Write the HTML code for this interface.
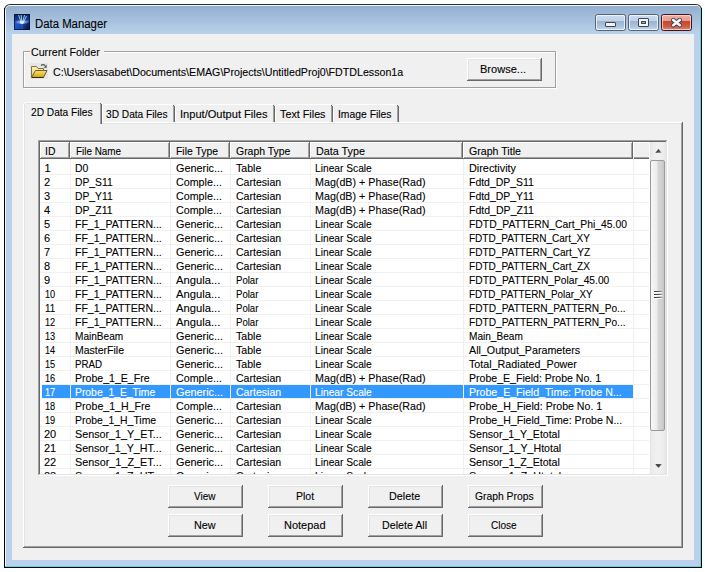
<!DOCTYPE html>
<html><head><meta charset="utf-8"><style>
html,body{margin:0;padding:0}
body{width:705px;height:572px;background:#fff;position:relative;overflow:hidden;font-family:"Liberation Sans",sans-serif;font-size:11px;color:#000}
div{position:absolute;box-sizing:border-box}
.t{white-space:nowrap;line-height:13px;height:13px;transform-origin:0 0;-webkit-text-stroke:0.1px currentColor}
</style></head><body>

<div style="left:4px;top:4px;width:698px;height:564px;background:#2e2e2e;border-radius:6px 6px 0 0"></div>
<div style="left:5px;top:5px;width:696px;height:562px;background:#f4f8fc;border-radius:5px 5px 0 0"></div>
<div style="left:6px;top:6px;width:694px;height:560px;background:#b9d1ea;border-radius:4px 4px 0 0"></div>
<div style="left:700px;top:8px;width:1px;height:559px;background:#4fd8f0"></div>
<div style="left:5px;top:566px;width:696px;height:1px;background:#4fd8f0"></div>
<div style="left:4px;top:567px;width:698px;height:1px;background:#000"></div>
<div style="left:701px;top:8px;width:1px;height:560px;background:#000"></div>
<div style="left:4px;top:8px;width:1px;height:560px;background:#000"></div>
<div style="left:6px;top:6px;width:694px;height:28px;background:linear-gradient(#94b0d0,#b9d1ea);border-radius:4px 4px 0 0"></div>
<div style="left:12px;top:34px;width:682px;height:526px;background:#f0f0f0"></div>
<svg style="position:absolute;left:14px;top:14px" width="16" height="16" viewBox="0 0 16 16">
<defs>
<linearGradient id="it" x1="0" y1="0" x2="0" y2="1"><stop offset="0" stop-color="#0a2460"/><stop offset="1" stop-color="#1a4aa8"/></linearGradient>
<linearGradient id="ibm" x1="0" y1="0" x2="1" y2="0.3"><stop offset="0" stop-color="#1f5ed8"/><stop offset="0.5" stop-color="#1a4cb8"/><stop offset="1" stop-color="#081a48"/></linearGradient>
<radialGradient id="ig" cx="0.5" cy="0.5" r="0.5"><stop offset="0" stop-color="#ffffff" stop-opacity="1"/><stop offset="0.6" stop-color="#c0e0ff" stop-opacity="0.6"/><stop offset="1" stop-color="#9fd0ff" stop-opacity="0"/></radialGradient>
</defs>
<rect x="0" y="0" width="16" height="8" fill="url(#it)"/>
<rect x="0" y="8" width="16" height="8" fill="url(#ibm)"/>
<path d="M8 9 V16" stroke="#5a8ae0" stroke-width="0.8" opacity="0.5"/>
<path d="M4.5 1 L7.5 9 M7 0.5 L8 9 M10.5 1 L8.5 9 M12.5 2 L9 9" stroke="#a8dcff" stroke-width="1" opacity="0.9"/>
<ellipse cx="8" cy="8" rx="7.5" ry="2.4" fill="url(#ig)" opacity="0.75"/>
<ellipse cx="8" cy="8.5" rx="2" ry="1.5" fill="#f0f8ff" opacity="0.8"/>
<rect x="0.5" y="0.5" width="15" height="15" fill="none" stroke="#081030" stroke-width="1" opacity="0.75"/>
</svg>
<div class="t" style="left:35.00px;top:17px;line-height:15px;height:15px;font-size:12px;transform:scaleX(0.9468);color:#000;">Data Manager</div>
<div style="left:595px;top:14px;width:31px;height:17px;border:1px solid #56657b;border-radius:2.5px;background:linear-gradient(#cddcee 0px,#bfd2ea 6.5px,#9ab5d3 6.5px,#a9c2dd 11px,#c6d9ee 15px)"></div><div style="left:596px;top:15px;width:29px;height:15px;border:1px solid rgba(240,246,252,0.85);border-radius:2px"></div>
<div style="left:628px;top:14px;width:31px;height:17px;border:1px solid #56657b;border-radius:2.5px;background:linear-gradient(#cddcee 0px,#bfd2ea 6.5px,#9ab5d3 6.5px,#a9c2dd 11px,#c6d9ee 15px)"></div><div style="left:629px;top:15px;width:29px;height:15px;border:1px solid rgba(240,246,252,0.85);border-radius:2px"></div>
<div style="left:661px;top:14px;width:31px;height:17px;border:1px solid #4b0f17;border-radius:2.5px;background:linear-gradient(#eab0a4 0px,#e39a8a 6.5px,#c6482f 6.5px,#c95a42 11px,#d98a74 15px)"></div><div style="left:662px;top:15px;width:29px;height:15px;border:1px solid rgba(255,220,210,0.8);border-radius:2px"></div>
<div style="left:605px;top:22px;width:11px;height:5px;background:#f4f4f4;border:1px solid #3b4452;border-radius:1px"></div>
<div style="left:638px;top:18px;width:11px;height:9px;background:#f4f4f4;border:1px solid #3b4452;border-radius:1px"></div>
<div style="left:641px;top:21px;width:5px;height:3px;background:#8fb0d4;border:1px solid #3b4452"></div>
<svg style="position:absolute;left:669px;top:16px" width="15" height="13" viewBox="0 0 15 13">
<path d="M4.2 4 L10.8 9.2 M10.8 4 L4.2 9.2" stroke="#3b4452" stroke-width="4.4" stroke-linecap="round"/>
<path d="M4.2 4 L10.8 9.2 M10.8 4 L4.2 9.2" stroke="#f6f6f6" stroke-width="2.6" stroke-linecap="round"/>
</svg>
<div style="left:24px;top:52px;width:533px;height:37px;border:1px solid #fff"></div>
<div style="left:23px;top:51px;width:533px;height:37px;border:1px solid #a0a0a0"></div>
<div style="left:30px;top:45px;width:74px;height:12px;background:#f0f0f0"></div>
<div class="t" style="left:31.00px;top:46px;transform:scaleX(0.9684);">Current Folder</div>
<svg style="position:absolute;left:30px;top:63px" width="18" height="16" viewBox="0 0 18 16">
<defs>
<linearGradient id="fb" x1="0" y1="0" x2="0" y2="1"><stop offset="0" stop-color="#fbf0b0"/><stop offset="1" stop-color="#e8d070"/></linearGradient>
<linearGradient id="ff" x1="0" y1="0" x2="0" y2="1"><stop offset="0" stop-color="#f6e070"/><stop offset="0.6" stop-color="#e8c030"/><stop offset="1" stop-color="#c89a10"/></linearGradient>
</defs>
<rect x="0" y="0" width="18" height="16" fill="#e5e5e5"/>
<path d="M1.5 14.5 V3.5 H6.5 L8 5.5 H13.5 V7.5" fill="url(#fb)" stroke="#7d7048" stroke-width="1"/>
<path d="M1.5 14.5 L5.5 7.5 H17 L13.5 14.5 Z" fill="url(#ff)" stroke="#6e6030" stroke-width="1"/>
<path d="M2 14.5 H13.5" stroke="#302810" stroke-width="1"/>
<path d="M11 2.5 Q13 0.6 15.2 2.6" fill="none" stroke="#505050" stroke-width="1.1"/>
<path d="M13.8 4.8 L16.8 4.8 L16.4 1.6 Z" fill="#505050"/>
</svg>
<div class="t" style="left:53.00px;top:66px;transform:scaleX(0.9675);">C:\Users\asabet\Documents\EMAG\Projects\UntitledProj0\FDTDLesson1a</div>
<div style="left:467px;top:58px;width:75px;height:23px;background:#696969"></div><div style="left:467px;top:58px;width:74px;height:22px;background:#fff"></div><div style="left:468px;top:59px;width:73px;height:21px;background:#a0a0a0"></div><div style="left:468px;top:59px;width:72px;height:20px;background:#e3e3e3"></div><div style="left:469px;top:60px;width:71px;height:19px;background:#f0f0f0"></div><div class="t" style="left:480.00px;top:63px;transform:scaleX(1.0046);">Browse...</div>
<div style="left:23px;top:122px;width:660px;height:426px;background:#696969"></div>
<div style="left:23px;top:122px;width:659px;height:425px;background:#fff"></div>
<div style="left:24px;top:123px;width:658px;height:424px;background:#a0a0a0"></div>
<div style="left:24px;top:123px;width:657px;height:423px;background:#e3e3e3"></div>
<div style="left:25px;top:124px;width:656px;height:422px;background:#f0f0f0"></div>
<div style="left:103px;top:105px;width:71px;height:17px;background:#f0f0f0"></div><div style="left:102px;top:106px;width:1px;height:16px;background:#fff"></div><div style="left:103px;top:105px;width:1px;height:1px;background:#fff"></div><div style="left:104px;top:104px;width:69px;height:1px;background:#fff"></div><div style="left:173px;top:105px;width:1px;height:1px;background:#696969"></div><div style="left:174px;top:106px;width:1px;height:16px;background:#696969"></div><div style="left:173px;top:106px;width:1px;height:16px;background:#a0a0a0"></div><div class="t" style="left:106.00px;top:108px;transform:scaleX(0.9235);">3D Data Files</div>
<div style="left:176px;top:105px;width:98px;height:17px;background:#f0f0f0"></div><div style="left:175px;top:106px;width:1px;height:16px;background:#fff"></div><div style="left:176px;top:105px;width:1px;height:1px;background:#fff"></div><div style="left:177px;top:104px;width:96px;height:1px;background:#fff"></div><div style="left:273px;top:105px;width:1px;height:1px;background:#696969"></div><div style="left:274px;top:106px;width:1px;height:16px;background:#696969"></div><div style="left:273px;top:106px;width:1px;height:16px;background:#a0a0a0"></div><div class="t" style="left:179.99px;top:108px;transform:scaleX(1.0078);">Input/Output Files</div>
<div style="left:276px;top:105px;width:56px;height:17px;background:#f0f0f0"></div><div style="left:275px;top:106px;width:1px;height:16px;background:#fff"></div><div style="left:276px;top:105px;width:1px;height:1px;background:#fff"></div><div style="left:277px;top:104px;width:54px;height:1px;background:#fff"></div><div style="left:331px;top:105px;width:1px;height:1px;background:#696969"></div><div style="left:332px;top:106px;width:1px;height:16px;background:#696969"></div><div style="left:331px;top:106px;width:1px;height:16px;background:#a0a0a0"></div><div class="t" style="left:280.00px;top:108px;transform:scaleX(0.9797);">Text Files</div>
<div style="left:334px;top:105px;width:64px;height:17px;background:#f0f0f0"></div><div style="left:333px;top:106px;width:1px;height:16px;background:#fff"></div><div style="left:334px;top:105px;width:1px;height:1px;background:#fff"></div><div style="left:335px;top:104px;width:62px;height:1px;background:#fff"></div><div style="left:397px;top:105px;width:1px;height:1px;background:#696969"></div><div style="left:398px;top:106px;width:1px;height:16px;background:#696969"></div><div style="left:397px;top:106px;width:1px;height:16px;background:#a0a0a0"></div><div class="t" style="left:338.06px;top:108px;transform:scaleX(0.9405);">Image Files</div>
<div style="left:24px;top:103px;width:77px;height:21px;background:#f0f0f0"></div><div style="left:23px;top:104px;width:1px;height:20px;background:#fff"></div><div style="left:24px;top:103px;width:1px;height:1px;background:#fff"></div><div style="left:25px;top:102px;width:75px;height:1px;background:#fff"></div><div style="left:100px;top:103px;width:1px;height:1px;background:#696969"></div><div style="left:101px;top:104px;width:1px;height:20px;background:#696969"></div><div style="left:100px;top:104px;width:1px;height:20px;background:#a0a0a0"></div><div style="left:24px;top:104px;width:1px;height:20px;background:#e3e3e3"></div><div style="left:25px;top:103px;width:75px;height:1px;background:#e3e3e3"></div><div class="t" style="left:31.00px;top:106px;transform:scaleX(0.9235);">2D Data Files</div>
<div style="left:25px;top:122px;width:75px;height:2px;background:#f0f0f0"></div>
<div style="left:24px;top:122px;width:1px;height:2px;background:#e3e3e3"></div>
<div style="left:38px;top:140px;width:630px;height:336px;background:#fff"></div>
<div style="left:38px;top:140px;width:629px;height:335px;background:#a0a0a0"></div>
<div style="left:39px;top:141px;width:628px;height:334px;background:#e3e3e3"></div>
<div style="left:39px;top:141px;width:627px;height:333px;background:#696969"></div>
<div style="left:40px;top:142px;width:626px;height:332px;background:#fff"></div>
<div style="left:40px;top:142px;width:30px;height:17px;background:#696969"></div>
<div style="left:40px;top:142px;width:29px;height:16px;background:#fff"></div>
<div style="left:41px;top:143px;width:28px;height:15px;background:#a0a0a0"></div>
<div style="left:41px;top:143px;width:27px;height:14px;background:#f0f0f0"></div>
<div class="t" style="left:45.06px;top:145px;transform:scaleX(0.9447);">ID</div>
<div style="left:70px;top:142px;width:100px;height:17px;background:#696969"></div>
<div style="left:70px;top:142px;width:99px;height:16px;background:#fff"></div>
<div style="left:71px;top:143px;width:98px;height:15px;background:#a0a0a0"></div>
<div style="left:71px;top:143px;width:97px;height:14px;background:#f0f0f0"></div>
<div class="t" style="left:75.50px;top:145px;transform:scaleX(0.8999);">File Name</div>
<div style="left:170px;top:142px;width:60px;height:17px;background:#696969"></div>
<div style="left:170px;top:142px;width:59px;height:16px;background:#fff"></div>
<div style="left:171px;top:143px;width:58px;height:15px;background:#a0a0a0"></div>
<div style="left:171px;top:143px;width:57px;height:14px;background:#f0f0f0"></div>
<div class="t" style="left:175.50px;top:145px;transform:scaleX(0.9436);">File Type</div>
<div style="left:230px;top:142px;width:80px;height:17px;background:#696969"></div>
<div style="left:230px;top:142px;width:79px;height:16px;background:#fff"></div>
<div style="left:231px;top:143px;width:78px;height:15px;background:#a0a0a0"></div>
<div style="left:231px;top:143px;width:77px;height:14px;background:#f0f0f0"></div>
<div class="t" style="left:236.00px;top:145px;transform:scaleX(0.9502);">Graph Type</div>
<div style="left:310px;top:142px;width:153px;height:17px;background:#696969"></div>
<div style="left:310px;top:142px;width:152px;height:16px;background:#fff"></div>
<div style="left:311px;top:143px;width:151px;height:15px;background:#a0a0a0"></div>
<div style="left:311px;top:143px;width:150px;height:14px;background:#f0f0f0"></div>
<div class="t" style="left:315.50px;top:145px;transform:scaleX(0.9796);">Data Type</div>
<div style="left:463px;top:142px;width:170px;height:17px;background:#696969"></div>
<div style="left:463px;top:142px;width:169px;height:16px;background:#fff"></div>
<div style="left:464px;top:143px;width:168px;height:15px;background:#a0a0a0"></div>
<div style="left:464px;top:143px;width:167px;height:14px;background:#f0f0f0"></div>
<div class="t" style="left:468.50px;top:145px;transform:scaleX(0.9650);">Graph Title</div>
<div style="left:633px;top:142px;width:17px;height:17px;background:#fff"></div>
<div style="left:634px;top:143px;width:16px;height:16px;background:#696969"></div>
<div style="left:634px;top:143px;width:15px;height:15px;background:#a0a0a0"></div>
<div style="left:634px;top:143px;width:15px;height:14px;background:#f0f0f0"></div>
<div style="left:649px;top:142px;width:1px;height:17px;background:#fff"></div>
<div style="left:40px;top:159px;width:609px;height:315px;overflow:hidden">
<div style="left:2px;top:226px;width:28px;height:13px;background:#3399ff"></div>
<div style="left:31px;top:226px;width:99px;height:13px;background:#3399ff"></div>
<div style="left:131px;top:226px;width:59px;height:13px;background:#3399ff"></div>
<div style="left:191px;top:226px;width:79px;height:13px;background:#3399ff"></div>
<div style="left:271px;top:226px;width:152px;height:13px;background:#3399ff"></div>
<div style="left:424px;top:226px;width:169px;height:13px;background:#3399ff"></div>
<div style="left:0px;top:15px;width:609px;height:1px;background:#f0f0f0"></div>
<div style="left:0px;top:29px;width:609px;height:1px;background:#f0f0f0"></div>
<div style="left:0px;top:43px;width:609px;height:1px;background:#f0f0f0"></div>
<div style="left:0px;top:57px;width:609px;height:1px;background:#f0f0f0"></div>
<div style="left:0px;top:71px;width:609px;height:1px;background:#f0f0f0"></div>
<div style="left:0px;top:85px;width:609px;height:1px;background:#f0f0f0"></div>
<div style="left:0px;top:99px;width:609px;height:1px;background:#f0f0f0"></div>
<div style="left:0px;top:113px;width:609px;height:1px;background:#f0f0f0"></div>
<div style="left:0px;top:127px;width:609px;height:1px;background:#f0f0f0"></div>
<div style="left:0px;top:141px;width:609px;height:1px;background:#f0f0f0"></div>
<div style="left:0px;top:155px;width:609px;height:1px;background:#f0f0f0"></div>
<div style="left:0px;top:169px;width:609px;height:1px;background:#f0f0f0"></div>
<div style="left:0px;top:183px;width:609px;height:1px;background:#f0f0f0"></div>
<div style="left:0px;top:197px;width:609px;height:1px;background:#f0f0f0"></div>
<div style="left:0px;top:211px;width:609px;height:1px;background:#f0f0f0"></div>
<div style="left:0px;top:225px;width:609px;height:1px;background:#f0f0f0"></div>
<div style="left:0px;top:239px;width:609px;height:1px;background:#f0f0f0"></div>
<div style="left:0px;top:253px;width:609px;height:1px;background:#f0f0f0"></div>
<div style="left:0px;top:267px;width:609px;height:1px;background:#f0f0f0"></div>
<div style="left:0px;top:281px;width:609px;height:1px;background:#f0f0f0"></div>
<div style="left:0px;top:295px;width:609px;height:1px;background:#f0f0f0"></div>
<div style="left:0px;top:309px;width:609px;height:1px;background:#f0f0f0"></div>
<div style="left:0px;top:323px;width:609px;height:1px;background:#f0f0f0"></div>
<div style="left:30px;top:0px;width:1px;height:315px;background:#f0f0f0"></div>
<div style="left:130px;top:0px;width:1px;height:315px;background:#f0f0f0"></div>
<div style="left:190px;top:0px;width:1px;height:315px;background:#f0f0f0"></div>
<div style="left:270px;top:0px;width:1px;height:315px;background:#f0f0f0"></div>
<div style="left:423px;top:0px;width:1px;height:315px;background:#f0f0f0"></div>
<div style="left:593px;top:0px;width:1px;height:315px;background:#f0f0f0"></div>
<div class="t" style="left:4.50px;top:3px;">1</div>
<div class="t" style="left:35.00px;top:3px;transform:scaleX(0.9467);">D0</div>
<div class="t" style="left:136.00px;top:3px;transform:scaleX(0.9868);">Generic...</div>
<div class="t" style="left:196.00px;top:3px;transform:scaleX(0.9626);">Table</div>
<div class="t" style="left:275.00px;top:3px;transform:scaleX(0.9290);">Linear Scale</div>
<div class="t" style="left:428.50px;top:3px;transform:scaleX(0.9861);">Directivity</div>
<div class="t" style="left:4.00px;top:17px;">2</div>
<div class="t" style="left:35.00px;top:17px;transform:scaleX(0.9366);">DP_S11</div>
<div class="t" style="left:136.00px;top:17px;transform:scaleX(0.9741);">Comple...</div>
<div class="t" style="left:196.00px;top:17px;transform:scaleX(0.9583);">Cartesian</div>
<div class="t" style="left:275.00px;top:17px;transform:scaleX(0.9739);">Mag(dB) + Phase(Rad)</div>
<div class="t" style="left:428.50px;top:17px;transform:scaleX(0.9506);">Fdtd_DP_S11</div>
<div class="t" style="left:4.00px;top:31px;">3</div>
<div class="t" style="left:35.00px;top:31px;transform:scaleX(0.9366);">DP_Y11</div>
<div class="t" style="left:136.00px;top:31px;transform:scaleX(0.9741);">Comple...</div>
<div class="t" style="left:196.00px;top:31px;transform:scaleX(0.9583);">Cartesian</div>
<div class="t" style="left:275.00px;top:31px;transform:scaleX(0.9739);">Mag(dB) + Phase(Rad)</div>
<div class="t" style="left:428.50px;top:31px;transform:scaleX(0.9506);">Fdtd_DP_Y11</div>
<div class="t" style="left:4.00px;top:45px;">4</div>
<div class="t" style="left:35.00px;top:45px;transform:scaleX(0.9513);">DP_Z11</div>
<div class="t" style="left:136.00px;top:45px;transform:scaleX(0.9741);">Comple...</div>
<div class="t" style="left:196.00px;top:45px;transform:scaleX(0.9583);">Cartesian</div>
<div class="t" style="left:275.00px;top:45px;transform:scaleX(0.9739);">Mag(dB) + Phase(Rad)</div>
<div class="t" style="left:428.50px;top:45px;transform:scaleX(0.9593);">Fdtd_DP_Z11</div>
<div class="t" style="left:4.00px;top:59px;">5</div>
<div class="t" style="left:35.00px;top:59px;transform:scaleX(0.9569);">FF_1_PATTERN...</div>
<div class="t" style="left:136.00px;top:59px;transform:scaleX(0.9868);">Generic...</div>
<div class="t" style="left:196.00px;top:59px;transform:scaleX(0.9583);">Cartesian</div>
<div class="t" style="left:275.00px;top:59px;transform:scaleX(0.9290);">Linear Scale</div>
<div class="t" style="left:428.50px;top:59px;transform:scaleX(0.9416);">FDTD_PATTERN_Cart_Phi_45.00</div>
<div class="t" style="left:4.00px;top:73px;">6</div>
<div class="t" style="left:35.00px;top:73px;transform:scaleX(0.9569);">FF_1_PATTERN...</div>
<div class="t" style="left:136.00px;top:73px;transform:scaleX(0.9868);">Generic...</div>
<div class="t" style="left:196.00px;top:73px;transform:scaleX(0.9583);">Cartesian</div>
<div class="t" style="left:275.00px;top:73px;transform:scaleX(0.9290);">Linear Scale</div>
<div class="t" style="left:428.50px;top:73px;transform:scaleX(0.9101);">FDTD_PATTERN_Cart_XY</div>
<div class="t" style="left:4.00px;top:87px;">7</div>
<div class="t" style="left:35.00px;top:87px;transform:scaleX(0.9569);">FF_1_PATTERN...</div>
<div class="t" style="left:136.00px;top:87px;transform:scaleX(0.9868);">Generic...</div>
<div class="t" style="left:196.00px;top:87px;transform:scaleX(0.9583);">Cartesian</div>
<div class="t" style="left:275.00px;top:87px;transform:scaleX(0.9290);">Linear Scale</div>
<div class="t" style="left:428.50px;top:87px;transform:scaleX(0.9170);">FDTD_PATTERN_Cart_YZ</div>
<div class="t" style="left:4.00px;top:101px;">8</div>
<div class="t" style="left:35.00px;top:101px;transform:scaleX(0.9569);">FF_1_PATTERN...</div>
<div class="t" style="left:136.00px;top:101px;transform:scaleX(0.9868);">Generic...</div>
<div class="t" style="left:196.00px;top:101px;transform:scaleX(0.9583);">Cartesian</div>
<div class="t" style="left:275.00px;top:101px;transform:scaleX(0.9290);">Linear Scale</div>
<div class="t" style="left:428.50px;top:101px;transform:scaleX(0.9143);">FDTD_PATTERN_Cart_ZX</div>
<div class="t" style="left:4.00px;top:115px;">9</div>
<div class="t" style="left:35.00px;top:115px;transform:scaleX(0.9569);">FF_1_PATTERN...</div>
<div class="t" style="left:136.00px;top:115px;transform:scaleX(1.0193);">Angula...</div>
<div class="t" style="left:196.00px;top:115px;transform:scaleX(0.8725);">Polar</div>
<div class="t" style="left:275.00px;top:115px;transform:scaleX(0.9290);">Linear Scale</div>
<div class="t" style="left:428.50px;top:115px;transform:scaleX(0.9317);">FDTD_PATTERN_Polar_45.00</div>
<div class="t" style="left:5.20px;top:129px;transform:scaleX(0.8335);">10</div>
<div class="t" style="left:35.00px;top:129px;transform:scaleX(0.9569);">FF_1_PATTERN...</div>
<div class="t" style="left:136.00px;top:129px;transform:scaleX(1.0193);">Angula...</div>
<div class="t" style="left:196.00px;top:129px;transform:scaleX(0.8725);">Polar</div>
<div class="t" style="left:275.00px;top:129px;transform:scaleX(0.9290);">Linear Scale</div>
<div class="t" style="left:428.50px;top:129px;transform:scaleX(0.8981);">FDTD_PATTERN_Polar_XY</div>
<div class="t" style="left:5.20px;top:143px;transform:scaleX(0.8937);">11</div>
<div class="t" style="left:35.00px;top:143px;transform:scaleX(0.9569);">FF_1_PATTERN...</div>
<div class="t" style="left:136.00px;top:143px;transform:scaleX(1.0193);">Angula...</div>
<div class="t" style="left:196.00px;top:143px;transform:scaleX(0.8725);">Polar</div>
<div class="t" style="left:275.00px;top:143px;transform:scaleX(0.9290);">Linear Scale</div>
<div class="t" style="left:428.50px;top:143px;transform:scaleX(0.9225);">FDTD_PATTERN_PATTERN_Po...</div>
<div class="t" style="left:5.20px;top:157px;transform:scaleX(0.8335);">12</div>
<div class="t" style="left:35.00px;top:157px;transform:scaleX(0.9569);">FF_1_PATTERN...</div>
<div class="t" style="left:136.00px;top:157px;transform:scaleX(1.0193);">Angula...</div>
<div class="t" style="left:196.00px;top:157px;transform:scaleX(0.8725);">Polar</div>
<div class="t" style="left:275.00px;top:157px;transform:scaleX(0.9290);">Linear Scale</div>
<div class="t" style="left:428.50px;top:157px;transform:scaleX(0.9225);">FDTD_PATTERN_PATTERN_Po...</div>
<div class="t" style="left:5.20px;top:171px;transform:scaleX(0.8335);">13</div>
<div class="t" style="left:35.00px;top:171px;transform:scaleX(0.9158);">MainBeam</div>
<div class="t" style="left:136.00px;top:171px;transform:scaleX(0.9868);">Generic...</div>
<div class="t" style="left:196.00px;top:171px;transform:scaleX(0.9626);">Table</div>
<div class="t" style="left:275.00px;top:171px;transform:scaleX(0.9290);">Linear Scale</div>
<div class="t" style="left:428.50px;top:171px;transform:scaleX(0.9174);">Main_Beam</div>
<div class="t" style="left:5.20px;top:185px;transform:scaleX(0.8335);">14</div>
<div class="t" style="left:35.00px;top:185px;transform:scaleX(0.9546);">MasterFile</div>
<div class="t" style="left:136.00px;top:185px;transform:scaleX(0.9868);">Generic...</div>
<div class="t" style="left:196.00px;top:185px;transform:scaleX(0.9626);">Table</div>
<div class="t" style="left:275.00px;top:185px;transform:scaleX(0.9290);">Linear Scale</div>
<div class="t" style="left:428.50px;top:185px;transform:scaleX(0.9718);">All_Output_Parameters</div>
<div class="t" style="left:5.20px;top:199px;transform:scaleX(0.8335);">15</div>
<div class="t" style="left:35.00px;top:199px;transform:scaleX(0.8851);">PRAD</div>
<div class="t" style="left:136.00px;top:199px;transform:scaleX(0.9868);">Generic...</div>
<div class="t" style="left:196.00px;top:199px;transform:scaleX(0.9626);">Table</div>
<div class="t" style="left:275.00px;top:199px;transform:scaleX(0.9290);">Linear Scale</div>
<div class="t" style="left:428.50px;top:199px;transform:scaleX(0.9746);">Total_Radiated_Power</div>
<div class="t" style="left:5.20px;top:213px;transform:scaleX(0.8335);">16</div>
<div class="t" style="left:35.00px;top:213px;transform:scaleX(0.9595);">Probe_1_E_Fre</div>
<div class="t" style="left:136.00px;top:213px;transform:scaleX(0.9741);">Comple...</div>
<div class="t" style="left:196.00px;top:213px;transform:scaleX(0.9583);">Cartesian</div>
<div class="t" style="left:275.00px;top:213px;transform:scaleX(0.9739);">Mag(dB) + Phase(Rad)</div>
<div class="t" style="left:428.50px;top:213px;transform:scaleX(0.9603);">Probe_E_Field: Probe No. 1</div>
<div class="t" style="left:5.20px;top:227px;transform:scaleX(0.8335);color:#fff;">17</div>
<div class="t" style="left:35.00px;top:227px;transform:scaleX(0.9415);color:#fff;">Probe_1_E_Time</div>
<div class="t" style="left:136.00px;top:227px;transform:scaleX(0.9868);color:#fff;">Generic...</div>
<div class="t" style="left:196.00px;top:227px;transform:scaleX(0.9583);color:#fff;">Cartesian</div>
<div class="t" style="left:275.00px;top:227px;transform:scaleX(0.9290);color:#fff;">Linear Scale</div>
<div class="t" style="left:428.50px;top:227px;transform:scaleX(0.9628);color:#fff;">Probe_E_Field_Time: Probe N...</div>
<div class="t" style="left:5.20px;top:241px;transform:scaleX(0.8335);">18</div>
<div class="t" style="left:35.00px;top:241px;transform:scaleX(0.9635);">Probe_1_H_Fre</div>
<div class="t" style="left:136.00px;top:241px;transform:scaleX(0.9741);">Comple...</div>
<div class="t" style="left:196.00px;top:241px;transform:scaleX(0.9583);">Cartesian</div>
<div class="t" style="left:275.00px;top:241px;transform:scaleX(0.9739);">Mag(dB) + Phase(Rad)</div>
<div class="t" style="left:428.50px;top:241px;transform:scaleX(0.9640);">Probe_H_Field: Probe No. 1</div>
<div class="t" style="left:5.20px;top:255px;transform:scaleX(0.8335);">19</div>
<div class="t" style="left:35.00px;top:255px;transform:scaleX(0.9453);">Probe_1_H_Time</div>
<div class="t" style="left:136.00px;top:255px;transform:scaleX(0.9868);">Generic...</div>
<div class="t" style="left:196.00px;top:255px;transform:scaleX(0.9583);">Cartesian</div>
<div class="t" style="left:275.00px;top:255px;transform:scaleX(0.9290);">Linear Scale</div>
<div class="t" style="left:428.50px;top:255px;transform:scaleX(0.9629);">Probe_H_Field_Time: Probe N...</div>
<div class="t" style="left:4.00px;top:269px;">20</div>
<div class="t" style="left:35.00px;top:269px;transform:scaleX(0.9784);">Sensor_1_Y_ET...</div>
<div class="t" style="left:136.00px;top:269px;transform:scaleX(0.9868);">Generic...</div>
<div class="t" style="left:196.00px;top:269px;transform:scaleX(0.9583);">Cartesian</div>
<div class="t" style="left:275.00px;top:269px;transform:scaleX(0.9290);">Linear Scale</div>
<div class="t" style="left:428.50px;top:269px;transform:scaleX(0.9582);">Sensor_1_Y_Etotal</div>
<div class="t" style="left:4.00px;top:283px;">21</div>
<div class="t" style="left:35.00px;top:283px;transform:scaleX(0.9718);">Sensor_1_Y_HT...</div>
<div class="t" style="left:136.00px;top:283px;transform:scaleX(0.9868);">Generic...</div>
<div class="t" style="left:196.00px;top:283px;transform:scaleX(0.9583);">Cartesian</div>
<div class="t" style="left:275.00px;top:283px;transform:scaleX(0.9290);">Linear Scale</div>
<div class="t" style="left:428.50px;top:283px;transform:scaleX(0.9668);">Sensor_1_Y_Htotal</div>
<div class="t" style="left:4.00px;top:297px;">22</div>
<div class="t" style="left:35.00px;top:297px;transform:scaleX(0.9853);">Sensor_1_Z_ET...</div>
<div class="t" style="left:136.00px;top:297px;transform:scaleX(0.9868);">Generic...</div>
<div class="t" style="left:196.00px;top:297px;transform:scaleX(0.9583);">Cartesian</div>
<div class="t" style="left:275.00px;top:297px;transform:scaleX(0.9290);">Linear Scale</div>
<div class="t" style="left:428.50px;top:297px;transform:scaleX(0.9645);">Sensor_1_Z_Etotal</div>
<div class="t" style="left:4.00px;top:311px;">23</div>
<div class="t" style="left:35.00px;top:311px;transform:scaleX(0.9786);">Sensor_1_Z_HT...</div>
<div class="t" style="left:136.00px;top:311px;transform:scaleX(0.9868);">Generic...</div>
<div class="t" style="left:196.00px;top:311px;transform:scaleX(0.9583);">Cartesian</div>
<div class="t" style="left:275.00px;top:311px;transform:scaleX(0.9290);">Linear Scale</div>
<div class="t" style="left:428.50px;top:311px;transform:scaleX(0.9731);">Sensor_1_Z_Htotal</div>
</div>
<div style="left:649px;top:142px;width:17px;height:332px;background:linear-gradient(to right,#fcfcfc 0px,#fcfcfc 1px,#e3e3e3 1px,#ececec 3px,#f1f1f1 9px,#ececec 15px,#e5e5e5 17px)"></div>
<svg style="position:absolute;left:649px;top:142px" width="17" height="17"><defs><linearGradient id="au" x1="0" y1="0" x2="1" y2="1"><stop offset="0" stop-color="#101010"/><stop offset="0.5" stop-color="#404040"/><stop offset="1" stop-color="#a0a0a0"/></linearGradient></defs><path d="M6 11 L9.5 6.8 L13 11 Z" fill="url(#au)" stroke="#fff" stroke-width="0.6" stroke-opacity="0.6"/></svg>
<svg style="position:absolute;left:649px;top:457px" width="17" height="17"><defs><linearGradient id="ad" x1="0" y1="0" x2="1" y2="1"><stop offset="0" stop-color="#101010"/><stop offset="0.5" stop-color="#404040"/><stop offset="1" stop-color="#a0a0a0"/></linearGradient></defs><path d="M6 7 L9.5 11.2 L13 7 Z" fill="url(#ad)" stroke="#fff" stroke-width="0.6" stroke-opacity="0.6"/></svg>
<div style="left:650px;top:160px;width:15px;height:271px;border:1px solid #9a9a9a;border-radius:2px;background:linear-gradient(to right,#f6f6f6 0px,#ececec 6px,#d6d6d6 7px,#cfcfcf 11px,#c4c4c4 13px)"></div>
<div style="left:654px;top:291px;width:8px;height:1px;background:linear-gradient(to right,#303030,#505050 50%,#9a9a9a)"></div>
<div style="left:654px;top:292px;width:8px;height:1px;background:#fafafa"></div>
<div style="left:654px;top:294px;width:8px;height:1px;background:linear-gradient(to right,#303030,#505050 50%,#9a9a9a)"></div>
<div style="left:654px;top:295px;width:8px;height:1px;background:#fafafa"></div>
<div style="left:654px;top:297px;width:8px;height:1px;background:linear-gradient(to right,#303030,#505050 50%,#9a9a9a)"></div>
<div style="left:654px;top:298px;width:8px;height:1px;background:#fafafa"></div>
<div style="left:168px;top:485px;width:75px;height:23px;background:#696969"></div><div style="left:168px;top:485px;width:74px;height:22px;background:#fff"></div><div style="left:169px;top:486px;width:73px;height:21px;background:#a0a0a0"></div><div style="left:169px;top:486px;width:72px;height:20px;background:#e3e3e3"></div><div style="left:170px;top:487px;width:71px;height:19px;background:#f0f0f0"></div><div class="t" style="left:193.60px;top:490px;transform:scaleX(0.9114);">View</div>
<div style="left:268px;top:485px;width:75px;height:23px;background:#696969"></div><div style="left:268px;top:485px;width:74px;height:22px;background:#fff"></div><div style="left:269px;top:486px;width:73px;height:21px;background:#a0a0a0"></div><div style="left:269px;top:486px;width:72px;height:20px;background:#e3e3e3"></div><div style="left:270px;top:487px;width:71px;height:19px;background:#f0f0f0"></div><div class="t" style="left:295.80px;top:490px;transform:scaleX(0.9578);">Plot</div>
<div style="left:368px;top:485px;width:75px;height:23px;background:#696969"></div><div style="left:368px;top:485px;width:74px;height:22px;background:#fff"></div><div style="left:369px;top:486px;width:73px;height:21px;background:#a0a0a0"></div><div style="left:369px;top:486px;width:72px;height:20px;background:#e3e3e3"></div><div style="left:370px;top:487px;width:71px;height:19px;background:#f0f0f0"></div><div class="t" style="left:389.10px;top:490px;transform:scaleX(0.9786);">Delete</div>
<div style="left:468px;top:485px;width:75px;height:23px;background:#696969"></div><div style="left:468px;top:485px;width:74px;height:22px;background:#fff"></div><div style="left:469px;top:486px;width:73px;height:21px;background:#a0a0a0"></div><div style="left:469px;top:486px;width:72px;height:20px;background:#e3e3e3"></div><div style="left:470px;top:487px;width:71px;height:19px;background:#f0f0f0"></div><div class="t" style="left:475.20px;top:490px;transform:scaleX(0.9401);">Graph Props</div>
<div style="left:168px;top:514px;width:75px;height:23px;background:#696969"></div><div style="left:168px;top:514px;width:74px;height:22px;background:#fff"></div><div style="left:169px;top:515px;width:73px;height:21px;background:#a0a0a0"></div><div style="left:169px;top:515px;width:72px;height:20px;background:#e3e3e3"></div><div style="left:170px;top:516px;width:71px;height:19px;background:#f0f0f0"></div><div class="t" style="left:194.00px;top:519px;transform:scaleX(0.9836);">New</div>
<div style="left:268px;top:514px;width:75px;height:23px;background:#696969"></div><div style="left:268px;top:514px;width:74px;height:22px;background:#fff"></div><div style="left:269px;top:515px;width:73px;height:21px;background:#a0a0a0"></div><div style="left:269px;top:515px;width:72px;height:20px;background:#e3e3e3"></div><div style="left:270px;top:516px;width:71px;height:19px;background:#f0f0f0"></div><div class="t" style="left:284.20px;top:519px;transform:scaleX(0.9983);">Notepad</div>
<div style="left:368px;top:514px;width:75px;height:23px;background:#696969"></div><div style="left:368px;top:514px;width:74px;height:22px;background:#fff"></div><div style="left:369px;top:515px;width:73px;height:21px;background:#a0a0a0"></div><div style="left:369px;top:515px;width:72px;height:20px;background:#e3e3e3"></div><div style="left:370px;top:516px;width:71px;height:19px;background:#f0f0f0"></div><div class="t" style="left:382.40px;top:519px;transform:scaleX(0.9693);">Delete All</div>
<div style="left:468px;top:514px;width:75px;height:23px;background:#696969"></div><div style="left:468px;top:514px;width:74px;height:22px;background:#fff"></div><div style="left:469px;top:515px;width:73px;height:21px;background:#a0a0a0"></div><div style="left:469px;top:515px;width:72px;height:20px;background:#e3e3e3"></div><div style="left:470px;top:516px;width:71px;height:19px;background:#f0f0f0"></div><div class="t" style="left:491.40px;top:519px;transform:scaleX(0.9105);">Close</div>
</body></html>
